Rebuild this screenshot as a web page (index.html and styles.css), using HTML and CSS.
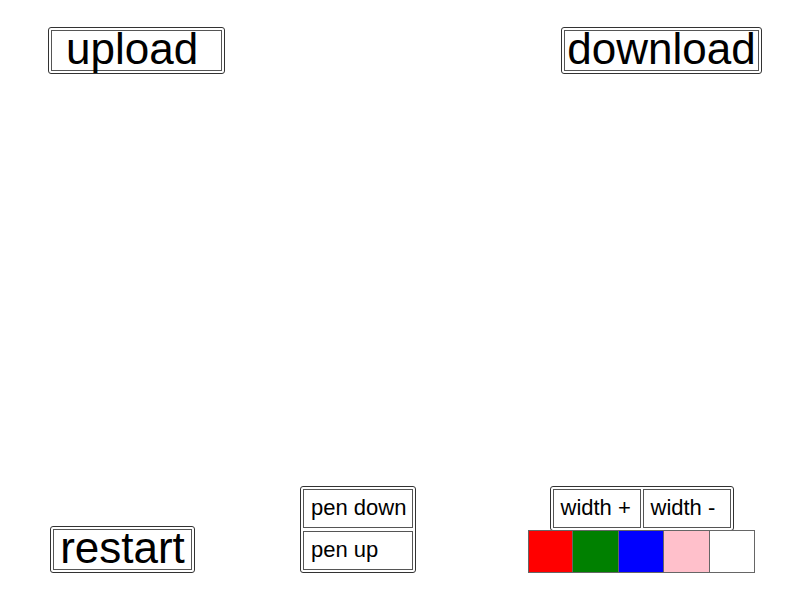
FILE: index.html
```html
<!DOCTYPE html>
<html>
<head>
<meta charset="utf-8">
<link rel="stylesheet" href="styles.css">
</head>
<body>
  <div class="top">
    <div class="group"><button class="btn big upload">upload</button></div>
    <div class="group"><button class="btn big download">download</button></div>
  </div>
  <div class="bottom">
    <div class="group restart-group"><button class="btn big restart">restart</button></div>
    <div class="group col pen-group">
      <button class="btn small pen">pen down</button>
      <button class="btn small pen">pen up</button>
    </div>
    <div class="right-col">
      <div class="group">
        <button class="btn small wbtn">width +</button>
        <button class="btn small wbtn">width -</button>
      </div>
      <div class="swatches">
        <div class="swatch red"></div>
        <div class="swatch green"></div>
        <div class="swatch blue"></div>
        <div class="swatch pink"></div>
        <div class="swatch white"></div>
      </div>
    </div>
  </div>
</body>
</html>
```
FILE: styles.css
```css
html, body {
  margin: 0;
  background: #fff;
}
body {
  height: 600px;
  box-sizing: border-box;
  padding: 27px 38px 27px 48px;
  display: flex;
  flex-direction: column;
  justify-content: space-between;
  font-family: "Liberation Sans", Arial, sans-serif;
}
.top {
  display: flex;
  justify-content: space-between;
  align-items: flex-start;
}
.group {
  border: 1px solid #333;
  border-radius: 3px;
  padding: 2px;
  display: flex;
  gap: 2px;
  background: #fff;
}
.col {
  flex-direction: column;
}
.btn {
  border: 1px solid #555;
  border-radius: 0;
  background: #fff;
  color: #000;
  margin: 0;
  font-family: "Liberation Sans", Arial, sans-serif;
  box-sizing: border-box;
  white-space: nowrap;
  overflow: visible;
}
.big {
  font-size: 44px;
  height: 41px;
  line-height: 35px;
  padding: 0 0 4px 0;
  text-align: center;
}
.upload { width: 171px; text-align: left; padding-left: 14px; }
.download { width: 195px; }
.restart { width: 139px; }
.small {
  font-size: 22px;
  height: 39px;
  line-height: 24px;
  padding: 0 0 2px 7px;
  text-align: left;
}
.pen { width: 110px; }
.pen-group { gap: 3px; }
.wbtn { width: 88px; }
.bottom {
  display: flex;
  align-items: flex-end;
}
.restart-group { margin-left: 2px; }
.pen-group { margin-left: 105px; }
.right-col {
  margin-left: 112px;
  display: flex;
  flex-direction: column;
  align-items: center;
  width: 227px;
}
.swatches {
  display: grid;
  grid-template-columns: repeat(5, 1fr);
  width: 227px;
  height: 43px;
  margin-top: -1px;
}
.swatch {
  border: 1px solid #666;
  margin-left: -1px;
}
.swatch:first-child { margin-left: 0; }
.red { background: #ff0000; }
.green { background: #008000; }
.blue { background: #0000ff; }
.pink { background: #ffc0cb; }
.white { background: #fff; }
```
